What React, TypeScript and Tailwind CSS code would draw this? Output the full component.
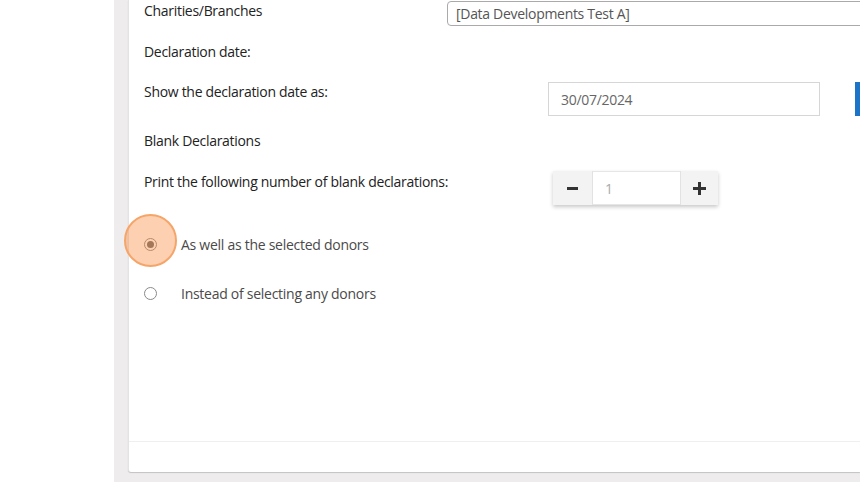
import React from 'react';

const font = { fontFamily: '"Open Sans", "Noto Sans", Arial, sans-serif' };

const Radio: React.FC<{ checked?: boolean; label: string; highlight?: boolean }> = ({ checked, label, highlight }) => (
  <label className="flex items-center h-[20px] relative">
    <span className="w-[13px] h-[13px] rounded-full border border-[#8a8a8a] bg-white flex items-center justify-center">
      {checked && <span className="w-[7px] h-[7px] rounded-full bg-[#6b6b6b]" />}
    </span>
    {highlight && (
      <span className="absolute left-[-20px] top-[-20px] w-[53px] h-[53px] rounded-full bg-[#f98a3c]/40 border-2 border-[#f6a569]" />
    )}
    <span className="ml-[24px] text-[14px] text-[#4a4a4a] tracking-[-0.27px]">{label}</span>
  </label>
);

export default function App() {
  return (
    <div className="w-[860px] h-[482px] flex bg-white overflow-hidden text-[#222]" style={font}>
      <div className="w-[114px] shrink-0 bg-white" />
      <div className="flex-1 bg-[#eeeced] pl-[14px] pb-[10px] flex min-w-0">
        <div className="flex-1 bg-white border-l border-[#e4e2e2] shadow-[0_1px_1px_rgba(0,0,0,0.18)] rounded-bl-[3px] flex flex-col min-w-0">
          <div className="flex-1 pl-[15px] flex flex-col text-[14px] tracking-[-0.3px]">
            {/* Charities */}
            <div className="flex h-[30px] shrink-0">
              <div className="w-[303px] shrink-0 leading-[20px] pt-[1px]">Charities/Branches</div>
              <div className="mt-[1px] h-[25px] w-[500px] shrink-0 border border-[#aaa] rounded-[4px] pl-[8px] flex items-center text-[#555] text-[14px]">
                [Data Developments Test A]
              </div>
            </div>
            <div className="mt-[12px] leading-[20px]">Declaration date:</div>
            {/* Show as */}
            <div className="mt-[20px] flex items-start">
              <div className="w-[404px] shrink-0 leading-[20px]">Show the declaration date as:</div>
              <div className="w-[272px] h-[34px] shrink-0 border border-[#d6d6d6] pl-[12px] flex items-center text-[#666] text-[14px]">
                30/07/2024
              </div>
              <div className="ml-[35px] w-[40px] h-[34px] shrink-0 bg-[#1b74c8]" />
            </div>
            <div className="mt-[15px] leading-[20px]">Blank Declarations</div>
            {/* Stepper */}
            <div className="mt-[20px] flex items-start">
              <div className="w-[409px] shrink-0 leading-[20px] pt-[1px]">Print the following number of blank declarations:</div>
              <div className="flex h-[34px] shadow-[0_2px_4px_rgba(0,0,0,0.22)]">
                <button className="w-[40px] h-full bg-[#f3f3f3] border-r border-[#e2e2e2] flex items-center justify-center">
                  <span className="block w-[11px] h-[3px] bg-[#333]" />
                </button>
                <div className="w-[87px] h-full bg-white border-y border-[#e6e6e6] pl-[12px] flex items-center text-[#aaa] text-[14px]">1</div>
                <button className="w-[38px] h-full bg-[#f3f3f3] border-l border-[#e2e2e2] flex items-center justify-center relative">
                  <span className="block w-[13px] h-[3px] bg-[#333]" />
                  <span className="absolute w-[3px] h-[13px] bg-[#333]" />
                </button>
              </div>
            </div>
            <div className="mt-[29px]">
              <Radio checked highlight label="As well as the selected donors" />
            </div>
            <div className="mt-[29px]">
              <Radio label="Instead of selecting any donors" />
            </div>
          </div>
          <div className="h-[31px] shrink-0 border-t border-[#f0efef]" />
        </div>
      </div>
    </div>
  );
}
